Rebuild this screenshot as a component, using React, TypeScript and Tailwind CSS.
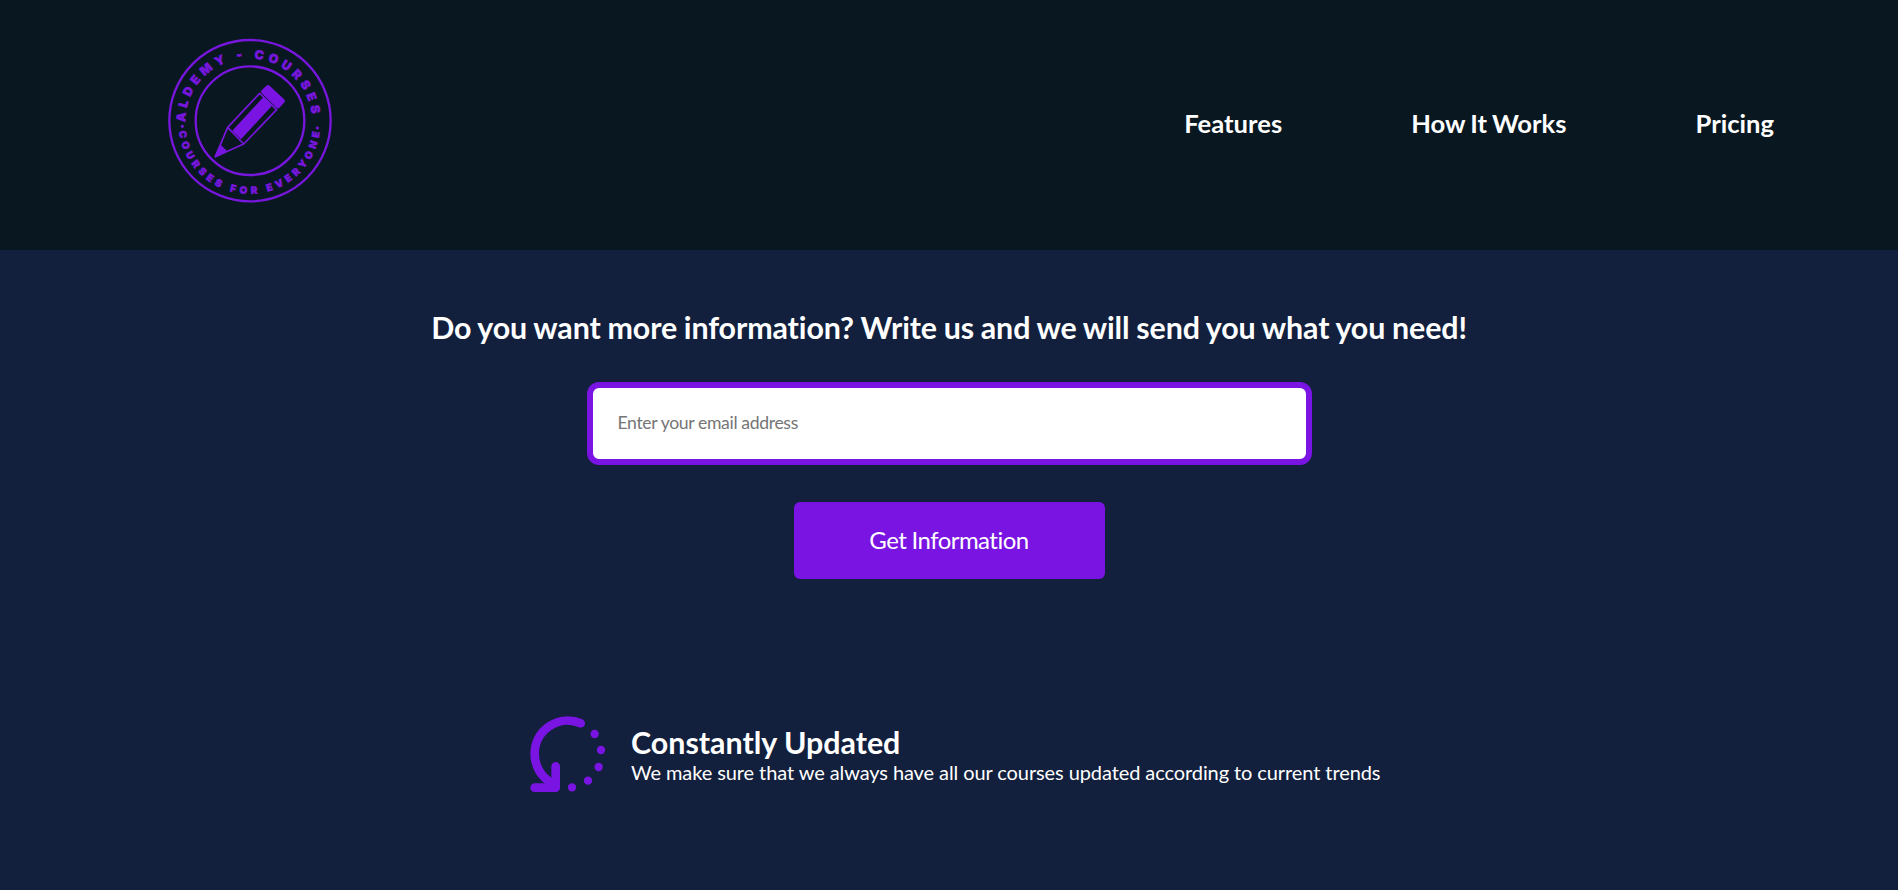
const navItems = ["Features", "How It Works", "Pricing"];

function Logo() {
  return (
    <svg className="block h-[180px] w-[180px] shrink-0" viewBox="0 0 540 540" fill="none" stroke="#7716dd">
      <circle cx="270" cy="272" r="242" strokeWidth="7" />
      <circle cx="270" cy="272" r="163" strokeWidth="7" />
      <defs>
        <path id="ring-top" d="M76 277 A190 190 0 0 1 266 85 A190 190 0 0 1 456 280" />
        <path id="ring-bottom" d="M56.5 304 A213 213 0 0 0 268 492 A213 213 0 0 0 481 285" />
      </defs>
      <g fill="#7716dd" strokeWidth="1.5" className="font-['Inter'] font-black">
        <text fontSize="37">
          <textPath href="#ring-top" textLength="576" lengthAdjust="spacing">ALDEMY - COURSES</textPath>
        </text>
        <text fontSize="30">
          <textPath href="#ring-bottom" textLength="616" lengthAdjust="spacing">COURSES FOR EVERYONE</textPath>
        </text>
        <circle cx="67" cy="289" r="4" />
        <circle cx="472" cy="294" r="4" />
      </g>
      <g strokeWidth="5" strokeLinejoin="round">
        <path d="M299 190 L203 292 L166 380 L251 342 L350 239 Z" />
        <path d="M203 292 L251 342" />
        <path d="M311 200 L336 227 L243 328 L217 302 Z" fill="#7914e3" stroke="none" />
        <path d="M181 347 L198 363 L166 380 Z" fill="#7914e3" />
        <path d="M309 185 L324 171 L369 213 L354 229 Z" fill="#7914e3" stroke="#7914e3" strokeWidth="12" />
      </g>
    </svg>
  );
}

function UpdateIcon() {
  return (
    <svg className="block h-[76px] w-[76px] shrink-0" viewBox="30 47 228 228" fill="none" stroke="#7914e3" strokeWidth="26" strokeLinecap="round" strokeLinejoin="round">
      <path d="M182 69 A99 99 0 0 0 44 160 A100 100 0 0 0 92 246" />
      <path d="M107 198 V262 H44" />
      <g fill="#7914e3" stroke="none">
        <circle cx="224" cy="101" r="12.5" />
        <circle cx="243" cy="149" r="12.5" />
        <circle cx="236" cy="200" r="12.5" />
        <circle cx="204" cy="241" r="12.5" />
        <circle cx="156" cy="261" r="12.5" />
      </g>
    </svg>
  );
}

export default function App() {
  return (
    <div className="flex min-h-screen flex-col bg-[#121f3d] font-['Lato',sans-serif] text-white [font-variant-ligatures:none]">
      <header className="flex h-[250px] items-start justify-between bg-[#091721] pt-[30px] pr-[124px] pl-[160px]">
        <Logo />
        <nav className="flex gap-[129px] pt-[77px]">
          {navItems.map((item) => (
            <a key={item} href="#" className="text-[25.6px] leading-8 font-bold [word-spacing:-1px]">
              {item}
            </a>
          ))}
        </nav>
      </header>
      <main className="flex flex-col items-center">
        <h1 className="pt-[57px] text-[30.4px] leading-10 font-bold tracking-[-0.11px] [word-spacing:-0.5px]">
          Do you want more information? Write us and we will send you what you need!
        </h1>
        <input
          type="email"
          placeholder="Enter your email address"
          className="mt-[35px] h-[83px] w-[725px] rounded-xl border-6 border-[#7914e3] bg-white px-[25px] pb-0.5 text-[17.6px] tracking-[-0.35px] text-gray-800 outline-none placeholder:text-[#757575]"
        />
        <button className="mt-[37px] h-[77px] w-[311px] rounded-md bg-[#7914e3] pb-0.5 text-2xl tracking-[-0.53px] [word-spacing:-0.5px]">
          Get Information
        </button>
        <section className="mt-[137px] flex w-[850px] gap-[25px] pl-[6px]">
          <UpdateIcon />
          <div className="pt-[8px] whitespace-nowrap">
            <h2 className="text-[30.4px] leading-9 font-bold">Constantly Updated</h2>
            <p className="text-xl leading-6 tracking-[-0.09px]">
              We make sure that we always have all our courses updated according to current trends
            </p>
          </div>
        </section>
      </main>
    </div>
  );
}
